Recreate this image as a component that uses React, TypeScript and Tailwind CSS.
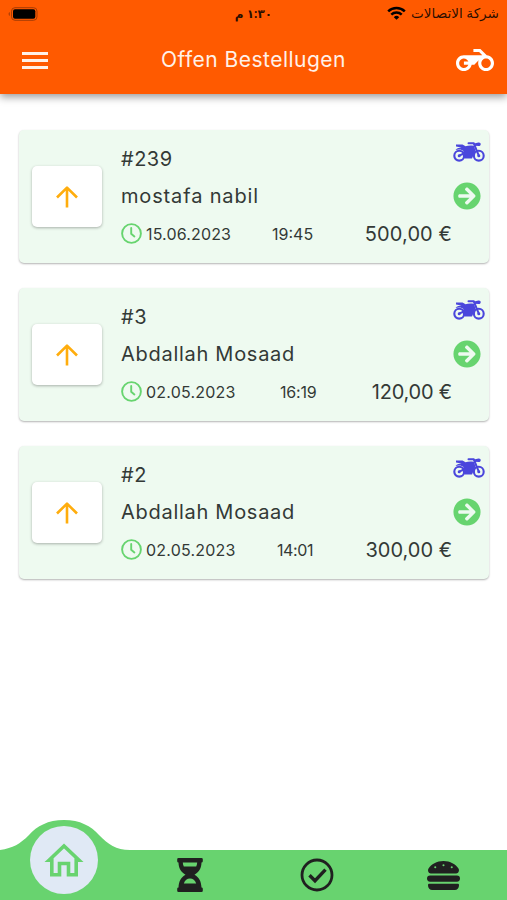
import type { ReactNode } from "react"
import { FaArrowCircleRight, FaHamburger } from "react-icons/fa"

interface Order {
  id: string
  customer: string
  customerClass: string
  date: string
  dateClass: string
  time: string
  timeClass: string
  total: string
  totalClass: string
}

const orders: Order[] = [
  {
    id: "#239",
    customer: "mostafa nabil",
    customerClass: "tracking-[0.85px]",
    date: "15.06.2023",
    dateClass: "tracking-[0.15px]",
    time: "19:45",
    timeClass: "left-[253px]",
    total: "500,00 €",
    totalClass: "tracking-[0.1px]",
  },
  {
    id: "#3",
    customer: "Abdallah Mosaad",
    customerClass: "tracking-[0.72px]",
    date: "02.05.2023",
    dateClass: "tracking-[0.2px]",
    time: "16:19",
    timeClass: "left-[261px] tracking-[-0.2px]",
    total: "120,00 €",
    totalClass: "tracking-[-0.2px]",
  },
  {
    id: "#2",
    customer: "Abdallah Mosaad",
    customerClass: "tracking-[0.72px]",
    date: "02.05.2023",
    dateClass: "tracking-[0.2px]",
    time: "14:01",
    timeClass: "left-[258px] tracking-[-0.4px]",
    total: "300,00 €",
    totalClass: "tracking-[0px]",
  },
]

function DeliveryIcon() {
  return (
    <svg width="38" height="38" viewBox="0 0 24 24" fill="#fff">
      <path d="M19.44 9.03L15.41 5H11v2h3.59l2 2H5c-2.8 0-5 2.2-5 5s2.2 5 5 5c2.46 0 4.45-1.69 4.9-4h1.65l2.77-2.77c-.21.54-.32 1.14-.32 1.77 0 2.8 2.2 5 5 5s5-2.2 5-5c0-2.65-1.97-4.77-4.56-4.97zM7.82 15C7.4 16.15 6.28 17 5 17c-1.63 0-3-1.37-3-3s1.37-3 3-3c1.28 0 2.4.85 2.82 2H5v2h2.82zM19 17c-1.66 0-3-1.34-3-3s1.34-3 3-3 3 1.34 3 3-1.34 3-3 3z" />
    </svg>
  )
}

function MotorbikeIcon() {
  return (
    <svg className="mt-3" width="32" height="20" viewBox="0 0 32 20" fill="#4a46dc" stroke="#4a46dc">
      <circle cx="6.2" cy="13.7" r="4.9" fill="none" strokeWidth="2.100" />
      <circle cx="25.8" cy="13.7" r="4.9" fill="none" strokeWidth="2.100" />
      <circle cx="6.2" cy="13.7" r="1.5" stroke="none" />
      <circle cx="25.8" cy="13.7" r="1.5" stroke="none" />
      <path
        d="M6.2 13.7 12 11M21 2l4.800 11.700M15.500 1.300h5.200l1.700 2"
        fill="none"
        strokeWidth="2"
        strokeLinecap="round"
      />
      <path
        d="M3 2.500h6.500l3 1.700c2.500-.7 5.500-1 8.500-.2l1.500 4.500-3.500 8h-7.500L9.500 12.500 10.500 9C9 7.500 6 7 2.500 8 4 6 6.500 5.500 8.500 5.400L3 4.600Z"
        stroke="none"
      />
      <path d="M22 1.300 25.500.5c1.400-.2 2.200.6 2.200 1.700s-.8 1.900-2.200 1.800L22.500 3.700Z" stroke="none" />
    </svg>
  )
}

function ArrowUpIcon() {
  return (
    <svg width="24" height="24" viewBox="0 0 24 24" fill="none" stroke="currentColor" strokeWidth="2.600">
      <path d="M12 22.500V2.800M2 12.500 12 2.600l10 9.900" strokeLinejoin="round" />
    </svg>
  )
}

function ClockIcon() {
  return (
    <svg width="21" height="21" viewBox="0 0 21 21" fill="none" stroke="#67d46f" strokeWidth="1.900">
      <circle cx="10.5" cy="10.5" r="9.4" />
      <path d="M10.200 5v5.800l3.200 2.700" strokeLinecap="round" />
    </svg>
  )
}

function StatusBar() {
  return (
    <div className="grid h-[27px] grid-cols-3 items-center px-2 font-['Noto_Sans','DejaVu_Sans',sans-serif] text-[13px] text-black/85">
      <svg width="30" height="14" viewBox="0 0 30 14">
        <rect x="3.5" y="0.7" width="25.5" height="12.6" rx="3.5" fill="none" stroke="#a63c05" />
        <rect x="5" y="2.3" width="22.3" height="9.4" rx="2" fill="#000" />
        <path d="M1.8 5C.2 5.6.2 8.4 1.8 9Z" fill="#a63c05" />
      </svg>
      <span dir="rtl" className="text-center text-[12px] font-bold">
        ١:٣٠ م
      </span>
      <span className="flex items-center justify-end gap-[5px]">
        <svg width="19" height="14" viewBox="0 0 19 14" fill="none" stroke="#000" strokeWidth="2.5">
          <path d="M1.2 5.3a12 12 0 0 1 16.6 0" />
          <path d="M4.3 8.6a7.6 7.6 0 0 1 10.4 0" />
          <path d="M9.5 13.8 6.8 11.2a3.8 3.8 0 0 1 5.4 0Z" fill="#000" stroke="none" />
        </svg>
        <span dir="rtl" className="whitespace-nowrap text-[13.600px]">
          شركة الاتصالات
        </span>
      </span>
    </div>
  )
}

function Header() {
  return (
    <header className="relative h-[94px] bg-[#ff5a00] shadow-[0_3px_8px_rgba(0,0,0,0.4)]">
      <StatusBar />
      <div className="flex h-[66px] items-center justify-between pl-[22px] pr-[13px]">
        <button className="flex w-[26px] flex-col gap-[4px]" aria-label="Menu">
          <span className="h-[3px] bg-[#fff1e8]" />
          <span className="h-[3px] bg-[#fff1e8]" />
          <span className="h-[3px] bg-[#fff1e8]" />
        </button>
        <h1 className="ml-[3px] text-[21px] tracking-[0.48px] text-[#fff1e8]">Offen Bestellugen</h1>
        <DeliveryIcon />
      </div>
    </header>
  )
}

function OrderCard({ order }: { order: Order }) {
  return (
    <article className="relative flex h-[133px] rounded-[5px] bg-[#eefaf0] pl-[13px] pr-[4px] shadow-[0_1px_2px_rgba(0,0,0,0.3)]">
      <button className="mt-9 flex h-[61px] w-[70px] items-center justify-center rounded-[5px] bg-white text-[#ffad0d] shadow-[0_1px_3px_rgba(0,0,0,0.3)]">
        <ArrowUpIcon />
      </button>
      <div className="ml-[19px] flex flex-1 flex-col pt-[11px] text-[20px] text-[#333936]">
        <span className="h-[37px] leading-[37px] tracking-[0.5px]">{order.id}</span>
        <span className={`h-[37px] leading-[37px] ${order.customerClass}`}>{order.customer}</span>
        <div className="flex h-[37px] items-center">
          <ClockIcon />
          <span className={`ml-[4px] text-[16px] ${order.dateClass}`}>{order.date}</span>
          <span className={`absolute text-[16px] ${order.timeClass}`}>{order.time}</span>
          <span className={`ml-auto ${order.totalClass}`}>{order.total}</span>
        </div>
      </div>
      <div className="ml-px flex w-8 flex-col">
        <MotorbikeIcon />
        <FaArrowCircleRight size={28} className="mt-5 text-[#67d46f]" />
      </div>
    </article>
  )
}

function TabItem({ children }: { children: ReactNode }) {
  return <button className="flex h-[50px] items-center justify-center text-[#202020]">{children}</button>
}

function TabBar() {
  return (
    <nav className="relative mt-auto grid h-[50px] grid-cols-4 bg-[#68d36f]">
      <svg
        className="absolute -top-[31px] left-0"
        width="130"
        height="32"
        viewBox="0 0 130 32"
        fill="#68d36f"
      >
        <path d="M0 32V31C13 29 20 25 29 16 37 7 48 1 64 1s27 6 35 15c9 9 17 15 31 15v1Z" />
      </svg>
      <div className="relative -top-[24px] left-[30px] flex size-[68px] items-center justify-center rounded-full bg-[#e0e9f5]">
        <svg width="40" height="36" viewBox="0 0 40 36" fill="none" stroke="#68d36f" strokeWidth="3.6">
          <path d="M5 18.200 20 4l15 14.200H32.200v14.500h-7.700V21.500h-9v11.200H7.800V18.200Z" />
        </svg>
      </div>
      <TabItem>
        <svg width="26" height="34" viewBox="0 0 26 34" fill="currentColor">
          <path
            fillRule="evenodd"
            d="M1.500 0h23a1.300 1.300 0 0 1 1.300 1.300v2a1.300 1.300 0 0 1-1.300 1.200C24.300 10 22.500 13.500 17.500 16.700c4.500 2.500 6.700 6.300 7 12.800a1.300 1.300 0 0 1 1.300 1.300v1.900a1.300 1.300 0 0 1-1.300 1.300h-23A1.300 1.300 0 0 1 .2 32.700v-1.900a1.300 1.300 0 0 1 1.300-1.300C1.800 23 4 19.200 8.500 16.700 3.500 13.500 1.700 10 1.500 4.500A1.300 1.300 0 0 1 .2 3.300v-2A1.300 1.300 0 0 1 1.500 0Zm4.300 4.500c0 1.500.4 2.800 1 4h12.400c.6-1.200 1-2.500 1-4Zm1 21h12.400C18 22 16 20.400 13 20.400S8 22 6.800 25.500Z"
          />
        </svg>
      </TabItem>
      <TabItem>
        <svg width="34" height="34" viewBox="0 0 34 34" fill="none" stroke="currentColor">
          <circle cx="17" cy="17" r="15" strokeWidth="2.800" />
          <path d="m9.500 17.200 5.500 5.500 10.500-11" strokeWidth="3.400" />
        </svg>
      </TabItem>
      <TabItem>
        <FaHamburger size={33} />
      </TabItem>
    </nav>
  )
}

export default function App() {
  return (
    <div className="flex h-screen flex-col overflow-hidden bg-white font-['Inter','Liberation_Sans',sans-serif]">
      <Header />
      <main className="flex flex-col gap-[25px] pl-[19px] pr-[18px] pt-9">
        {orders.map((order) => (
          <OrderCard key={order.id} order={order} />
        ))}
      </main>
      <TabBar />
    </div>
  )
}
